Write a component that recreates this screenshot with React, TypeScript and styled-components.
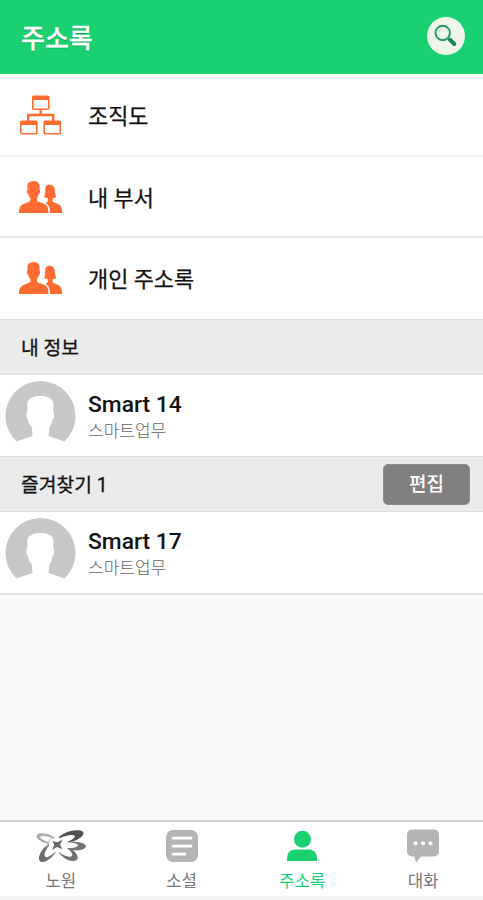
import React from 'react';
import styled, { createGlobalStyle } from 'styled-components';

const GlobalStyle = createGlobalStyle`
  * { box-sizing: border-box; }
  body {
    margin: 0;
    background: #fafafa;
    font-family: Roboto, "Noto Sans CJK KR", sans-serif;
    color: #111;
  }
  svg { display: block; flex: none; }
`;

const Screen = styled.div`
  width: 100%;
  height: 900px;
  display: flex;
  flex-direction: column;
  overflow: hidden;
`;

const Header = styled.header`
  height: 74px;
  flex: none;
  display: flex;
  align-items: center;
  justify-content: space-between;
  padding: 0 18px 0 21px;
  background: #1ad172;
`;

const Title = styled.h1`
  margin: 3px 0 0;
  font-size: 26px;
  line-height: 36px;
  font-weight: 500;
  color: #fff;
  -webkit-text-stroke: 0.3px #fff;
  text-shadow: 0 1px 1px rgba(0, 60, 30, 0.35);
`;

const SearchButton = styled.button`
  width: 38px;
  height: 38px;
  margin-bottom: 2px;
  padding: 0;
  border: 0;
  border-radius: 50%;
  background: #f0f5e9;
`;

const MenuRow = styled.div<{ $height: number; $line: string }>`
  height: ${p => p.$height}px;
  flex: none;
  display: flex;
  align-items: center;
  padding-left: 18px;
  gap: 25px;
  background: #fff;
  border-bottom: 2px solid ${p => p.$line};
  font-size: 21.9px;
  line-height: 30px;
  font-weight: 400;
  -webkit-text-stroke: 0.25px #111;
`;

const MenuLabel = styled.span`
  padding-top: 4px;
`;

const Section = styled.div<{ $height: number }>`
  height: ${p => p.$height}px;
  flex: none;
  display: flex;
  align-items: center;
  justify-content: space-between;
  padding: 0 13px 0 21px;
  background: #ebebeb;
  border-top: 1px solid #dedede;
  border-bottom: 1px solid #dedede;
  font-size: 19.3px;
  line-height: 28px;
  -webkit-text-stroke: 0.3px #111;
`;

const SectionLabel = styled.span`
  padding-top: 3px;
`;

const EditButton = styled.button`
  width: 87px;
  height: 41px;
  padding: 2px 0 0;
  border: 1px solid #8c8c8c;
  border-radius: 5px;
  background: #808080;
  color: #fff;
  font: 500 19px/26px Roboto, "Noto Sans CJK KR", sans-serif;
  -webkit-text-stroke: 0;
`;

const Person = styled.div<{ $height: number }>`
  height: ${p => p.$height}px;
  flex: none;
  display: flex;
  align-items: flex-start;
  gap: 12px;
  padding: 5px 0 0 5px;
  background: #fff;
`;

const PersonText = styled.div`
  padding-top: 10px;
`;

const Name = styled.div`
  font-size: 22.8px;
  line-height: 30px;
  font-weight: 500;
`;

const Department = styled.div`
  font-size: 17px;
  line-height: 22px;
  font-weight: 300;
  color: #666;
`;

const Blank = styled.div`
  flex: 1;
  border-top: 2px solid #e2e2e2;
`;

const TabBar = styled.nav`
  height: 76px;
  flex: none;
  display: grid;
  grid-template-columns: repeat(4, 1fr);
  background: #fff;
  border-top: 2px solid #cecece;
`;

const Tab = styled.div<{ $active?: boolean }>`
  display: flex;
  flex-direction: column;
  align-items: center;
  padding: 7px 0 0 1px;
  font-size: 16.8px;
  line-height: 24px;
  color: ${p => (p.$active ? '#1ad172' : '#777')};
`;

const TabIcon = styled.div`
  height: 40px;
`;

const Footer = styled.div`
  height: 4px;
  flex: none;
  background: #f5f5f5;
`;

const SearchIcon = () => (
  <svg width="38" height="38" viewBox="0 0 38 38" fill="none">
    <circle cx="15.7" cy="16" r="7.2" stroke="#22986a" strokeWidth="1.9" />
    <path d="M11.5 15a5 5 0 0 1 4-3.5" stroke="#b9dccb" strokeWidth="1" />
    <path d="M21 21.3l2 2" stroke="#22986a" strokeWidth="2" />
    <path d="M23 22.8l4.3 4.2" stroke="#148551" strokeWidth="4" strokeLinecap="round" />
  </svg>
);

const OrgIcon = () => (
  <svg width="45" height="42" viewBox="0 0 45 42" fill="none" stroke="#ff6d2e" strokeWidth="1.6">
    <rect x="14.7" y="2.2" width="16" height="13" rx="1" />
    <rect x="2.8" y="27.2" width="16" height="12.6" rx="1" />
    <rect x="26.2" y="27.2" width="16" height="12.6" rx="1" />
    <path d="M14.7 4h16M2.8 29h16M26.2 29h16" strokeWidth="3.8" />
    <path d="M22.7 15v6M10.2 27v-6h25v6" strokeWidth="2.4" />
  </svg>
);

const PeopleIcon = () => (
  <svg width="45" height="34" viewBox="0 0 45 34" fill="#ff6b30">
    <path d="M14.5 1.2c4.6-.6 7.5 2.1 7 6.4l-.2 2.2c1 .1 1 .9.7 2.2-.3 1.5-.8 2.2-1.5 2.4-.3 1.7-1 2.9-1.6 3.9l.3 3 6 2.3c4 1.5 5.2 3.2 5.2 9.4H1c0-5.4 1.2-7.6 5.2-9.2l6-2.5.3-3c-1-1-1.6-2.2-1.9-3.9-.8-.3-1.3-1-1.6-2.4-.3-1.3-.2-2.1.7-2.2l-.3-3c-.2-3.2 1.5-5.4 5.1-5.6z" />
    <path d="M28.2 6c1.4-1.5 4-1.7 5.8-.7 2.6 1.4 3 4.4 2.9 7.3l1.3 4.7-3.5 1v3.4l5.3 2.2c3 1.3 4.2 3.7 4.1 9.1H32c0-4.5-.8-8.3-4.4-10.1l2.2-1.6v-3l-3.9-1.2c1.2-2 1.2-4 1.3-6.9.1-1.7.2-3.2 1-4.2z" />
  </svg>
);

const Avatar = () => (
  <svg width="71" height="64" viewBox="0 0 71 64">
    <path fill="#c9c6ca" d="M11.5 61.5A35 35 0 1 1 59.5 61.5L43.5 56L44.5 47Q46.7 45 47.4 39.5C49 39 49.2 36 49 32.5L48.3 30.5L48.5 24C48.3 18.5 42.5 16 35.5 16C28.5 16 22.6 18.5 22.2 24L22.5 30.5L21.4 32.5C21.2 36 21.6 39 23 39.5Q23.8 45 26.8 47L27.6 56Z" />
  </svg>
);

const NowonIcon = () => (
  <svg width="50" height="34" viewBox="10 16 150 102">
    <ellipse cx="42" cy="45" rx="32" ry="14" transform="rotate(18 42 45)" fill="#adadad" />
    <ellipse cx="47" cy="85" rx="37" ry="18" transform="rotate(-48 47 85)" fill="#6c6c6c" />
    <ellipse cx="105" cy="89" rx="34" ry="17" transform="rotate(32 105 89)" fill="#717171" />
    <ellipse cx="126" cy="67" rx="34" ry="13" transform="rotate(3 126 67)" fill="#737373" />
    <ellipse cx="113" cy="39" rx="41" ry="16" transform="rotate(-17 113 39)" fill="#505050" />
    <g fill="#fff">
      <ellipse cx="52" cy="49" rx="31" ry="8" transform="rotate(18 52 49)" />
      <ellipse cx="59" cy="75" rx="32" ry="13" transform="rotate(-48 59 75)" />
      <ellipse cx="92" cy="80" rx="31" ry="12" transform="rotate(32 92 80)" />
      <ellipse cx="104" cy="64" rx="32" ry="9" transform="rotate(3 104 64)" />
      <ellipse cx="96" cy="47" rx="32" ry="9" transform="rotate(-17 96 47)" />
      <ellipse cx="77" cy="64" rx="29" ry="22" />
    </g>
    <path d="M56 43L48 54L42 72" fill="none" stroke="#bbb" strokeWidth="3" />
    <path fill="#666" d="M59 52L74 56L90 48L82 63L89 76L73 70L58 79L65 64Z" />
  </svg>
);

const SocialIcon = () => (
  <svg width="34" height="34" viewBox="0 0 34 34" fill="none">
    <rect x="1" y="1" width="32" height="32" rx="7" fill="#b4b4b4" />
    <path d="M8 9.2h18M8 17.2h18M8 25.2h12" stroke="#fff" strokeWidth="2.8" strokeLinecap="round" />
  </svg>
);

const ContactIcon = () => (
  <svg width="34" height="34" viewBox="0 0 34 34" fill="#1ad172">
    <circle cx="17.5" cy="10.3" r="8.5" />
    <path d="M2 32v-3.5a8 8 0 0 1 8-8h14a8 8 0 0 1 8 8V32z" />
  </svg>
);

const ChatIcon = () => (
  <svg width="34" height="34" viewBox="0 0 34 34" fill="#b4b4b4">
    <path d="M6 .5h22a5 5 0 0 1 5 5v17a5 5 0 0 1-5 5H15l-5 6-1.5-6H6a5 5 0 0 1-5-5v-17a5 5 0 0 1 5-5z" />
    <g fill="#fff">
      <circle cx="9.5" cy="14.2" r="2" />
      <circle cx="17" cy="14.2" r="2" />
      <circle cx="24.5" cy="14.2" r="2" />
    </g>
  </svg>
);

const tabs = [
  { label: '노원', icon: <NowonIcon /> },
  { label: '소셜', icon: <SocialIcon /> },
  { label: '주소록', icon: <ContactIcon />, active: true },
  { label: '대화', icon: <ChatIcon /> },
];

const PersonRow = ({ name, height }: { name: string; height: number }) => (
  <Person $height={height}>
    <Avatar />
    <PersonText>
      <Name>{name}</Name>
      <Department>스마트업무</Department>
    </PersonText>
  </Person>
);

export default function App() {
  return (
    <Screen>
      <GlobalStyle />
      <Header>
        <Title>주소록</Title>
        <SearchButton aria-label="검색"><SearchIcon /></SearchButton>
      </Header>
      <MenuRow $height={83} $line="#f0f0f0"><OrgIcon /><MenuLabel>조직도</MenuLabel></MenuRow>
      <MenuRow $height={81} $line="#e6e6e6"><PeopleIcon /><MenuLabel>내 부서</MenuLabel></MenuRow>
      <MenuRow $height={81} $line="#ffffff"><PeopleIcon /><MenuLabel>개인 주소록</MenuLabel></MenuRow>
      <Section $height={56}><SectionLabel>내 정보</SectionLabel></Section>
      <PersonRow name="Smart 14" height={81} />
      <Section $height={56}>
        <SectionLabel>즐겨찾기 1</SectionLabel>
        <EditButton>편집</EditButton>
      </Section>
      <PersonRow name="Smart 17" height={81} />
      <Blank />
      <TabBar>
        {tabs.map(t => (
          <Tab key={t.label} $active={t.active}>
            <TabIcon>{t.icon}</TabIcon>
            {t.label}
          </Tab>
        ))}
      </TabBar>
      <Footer />
    </Screen>
  );
}
